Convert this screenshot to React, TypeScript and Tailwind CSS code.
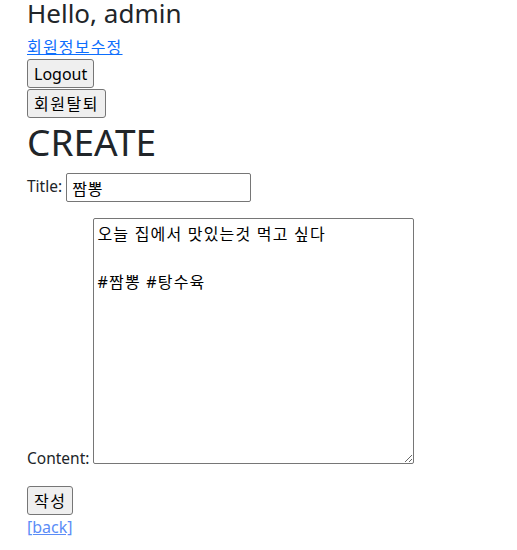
import React, { useState } from "react";

const font = "font-['Segoe_UI','Noto_Sans','Noto_Sans_CJK_KR',sans-serif]";

const btn =
    "block bg-[#efefef] border border-[#767676] rounded-[3px] px-[6px] h-[29px] text-[16px] leading-[20px] text-black";

const App = () => {
    const [title, setTitle] = useState("짬뽕");
    const [content, setContent] = useState(
        "오늘 집에서 맛있는것 먹고 싶다\n\n#짬뽕 #탕수육"
    );

    return (
        <div className={`min-h-screen bg-white text-[#212529] ${font}`}>
            <div className="px-[27px]">
                <h3 className="text-[26px] leading-[26px] font-normal mb-[9px]">
                    Hello, admin
                </h3>
                <a
                    href="#"
                    className="block w-fit text-[16px] leading-[24px] tracking-[1.2px] text-[#0d6efd] underline"
                >
                    회원정보수정
                </a>
                <button className={btn}>Logout</button>
                <button className={`${btn} mt-px tracking-[1.5px]`}>회원탈퇴</button>
                <h1 className="text-[37px] leading-[48px] font-normal mb-[7px]">
                    CREATE
                </h1>
                <form onSubmit={(e) => e.preventDefault()}>
                    <p className="mb-[16px] text-[15.5px] leading-[24px]">
                        Title:{" "}
                        <input
                            type="text"
                            value={title}
                            onChange={(e) => setTitle(e.target.value)}
                            className="w-[185px] h-[29px] border border-[#767676] rounded-[2px] px-[5px] text-[16px] tracking-[1px] text-black align-middle"
                        />
                    </p>
                    <p className="mb-[16px] text-[15.5px] leading-[24px]">
                        Content:{" "}
                        <textarea
                            value={content}
                            onChange={(e) => setContent(e.target.value)}
                            className="w-[321px] h-[246px] border border-[#767676] rounded-[2px] px-[3px] py-[3px] text-[16px] leading-[24px] tracking-[1.2px] text-black align-baseline resize"
                        />
                    </p>
                    <button type="submit" className={`${btn} tracking-[1.5px]`}>
                        작성
                    </button>
                </form>
                <a
                    href="#"
                    className="block w-fit text-[16px] leading-[24px] text-[#5b8cf7] underline"
                >
                    [back]
                </a>
            </div>
        </div>
    );
};

export default App;
